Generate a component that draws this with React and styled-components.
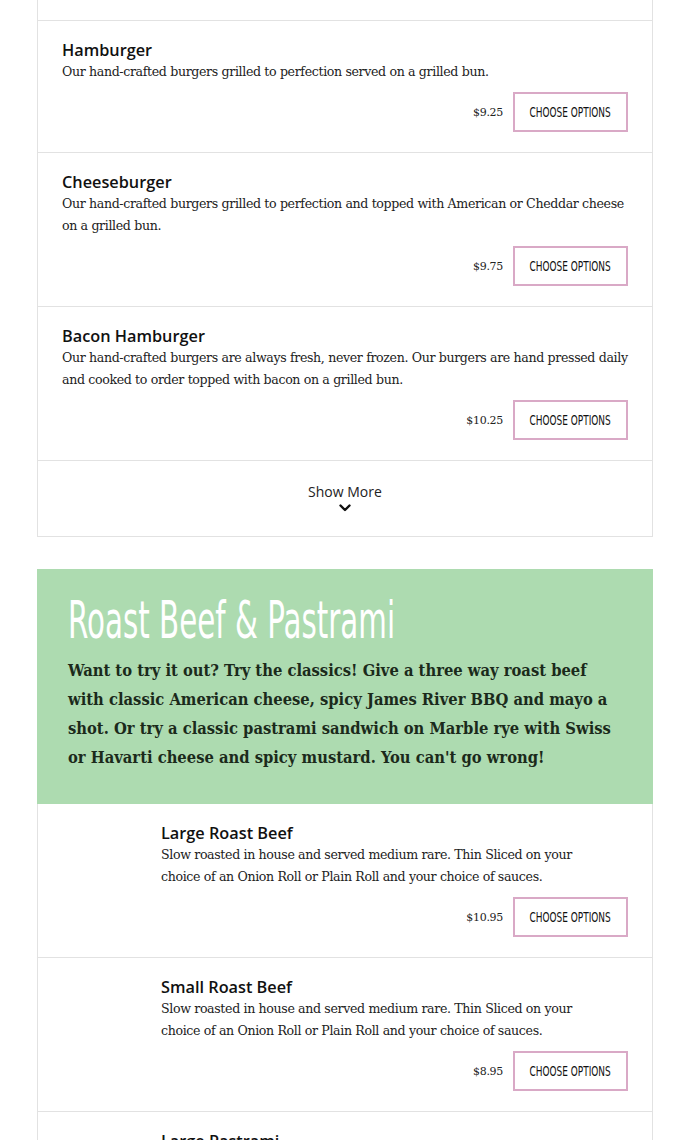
import React from "react";
import styled, { createGlobalStyle } from "styled-components";

const Global = createGlobalStyle`
  html, body { margin: 0; padding: 0; background: #fff; }
  body { font-family: "Open Sans", sans-serif; color: #111; }
`;

const Page = styled.div`
  padding: 0 37px 40px;
  display: flex;
  flex-direction: column;
  gap: 32px;
`;

const Card = styled.div`
  border: 1px solid #e2e2e2;
  border-top: ${(p) => (p.$flushTop ? "none" : "1px solid #e2e2e2")};
  display: flex;
  flex-direction: column;
`;

const TopSpacer = styled.div`
  height: 20px;
`;

const Item = styled.div`
  display: flex;
  padding: 18px 24px 20px ${(p) => (p.$indent ? "123px" : "24px")};
  border-top: ${(p) => (p.$first ? "none" : "1px solid #e2e2e2")};
`;

const ItemBody = styled.div`
  flex: 1;
  display: flex;
  flex-direction: column;
  padding-right: ${(p) => (p.$indent ? "30px" : "0")};
`;

const Title = styled.h3`
  margin: 0;
  font-family: "Open Sans", sans-serif;
  font-weight: 600;
  font-size: 16.3px;
  line-height: 22px;
  color: #111;
`;

const Desc = styled.p`
  margin: 0;
  font-family: "DejaVu Serif", serif;
  font-size: 12.6px;
  line-height: 22px;
  color: #222;
  letter-spacing: -0.36px;
`;

const Actions = styled.div`
  display: flex;
  justify-content: flex-end;
  align-items: center;
  gap: 10px;
  margin-top: 9px;
  margin-right: ${(p) => (p.$indent ? "-30px" : "0")};
`;

const Price = styled.span`
  font-family: "DejaVu Serif", serif;
  font-size: 11px;
  letter-spacing: -0.3px;
  color: #222;
`;

const Button = styled.button`
  width: 115px;
  height: 40px;
  border: 2px solid #d9a9c6;
  background: #fff;
  padding: 0;
  display: flex;
  align-items: center;
  justify-content: center;
  cursor: pointer;
`;

const ButtonLabel = styled.span`
  display: inline-block;
  white-space: nowrap;
  font-family: "DejaVu Sans Condensed", "DejaVu Sans", sans-serif;
  font-size: 14px;
  color: #111;
  transform: scaleX(0.71);
`;

const ShowMore = styled.div`
  border-top: 1px solid #e2e2e2;
  height: 76px;
  display: flex;
  flex-direction: column;
  align-items: center;
  justify-content: center;
  gap: 3px;
  font-family: "Open Sans", sans-serif;
  font-size: 14px;
  line-height: 19px;
  color: #222;
  padding-bottom: 4px;
  box-sizing: border-box;
`;

const Banner = styled.div`
  background: #addbb0;
  padding: 24px 31px 32px;
  margin: -1px -1px 0;
`;

const BannerTitle = styled.h2`
  margin: 0;
  font-family: "DejaVu Sans Condensed", "DejaVu Sans", sans-serif;
  font-weight: 400;
  font-size: 51px;
  line-height: 56px;
  white-space: nowrap;
  color: #fff;
  transform: scaleX(0.64);
  transform-origin: left center;
`;

const BannerText = styled.p`
  margin: 7px 0 0;
  font-family: "DejaVu Serif Condensed", "DejaVu Serif", serif;
  font-weight: 700;
  font-size: 16.4px;
  line-height: 29px;
  color: #1b2a1b;
`;

const Chevron = () => (
  <svg width="12" height="8" viewBox="0 0 12 8">
    <path d="M1.5 1.5 L6 6 L10.5 1.5" fill="none" stroke="#111" strokeWidth="2.4" strokeLinecap="round" strokeLinejoin="round" />
  </svg>
);

const MenuItem = ({ title, desc, price, first, indent }) => (
  <Item $first={first} $indent={indent}>
    <ItemBody $indent={indent}>
      <Title>{title}</Title>
      <Desc>{desc}</Desc>
      <Actions $indent={indent}>
        <Price>{price}</Price>
        <Button>
          <ButtonLabel>CHOOSE OPTIONS</ButtonLabel>
        </Button>
      </Actions>
    </ItemBody>
  </Item>
);

const burgers = [
  { title: "Hamburger", desc: "Our hand-crafted burgers grilled to perfection served on a grilled bun.", price: "$9.25" },
  { title: "Cheeseburger", desc: "Our hand-crafted burgers grilled to perfection and topped with American or Cheddar cheese on a grilled bun.", price: "$9.75" },
  { title: "Bacon Hamburger", desc: "Our hand-crafted burgers are always fresh, never frozen. Our burgers are hand pressed daily and cooked to order topped with bacon on a grilled bun.", price: "$10.25" },
];

const beef = [
  { title: "Large Roast Beef", desc: "Slow roasted in house and served medium rare. Thin Sliced on your choice of an Onion Roll or Plain Roll and your choice of sauces.", price: "$10.95" },
  { title: "Small Roast Beef", desc: "Slow roasted in house and served medium rare. Thin Sliced on your choice of an Onion Roll or Plain Roll and your choice of sauces.", price: "$8.95" },
  { title: "Large Pastrami", desc: "Thin sliced pastrami on Marble rye with Swiss or Havarti cheese and spicy mustard.", price: "$10.95" },
];

export default function App() {
  return (
    <>
      <Global />
      <Page>
        <Card $flushTop>
          <TopSpacer />
          {burgers.map((b) => (
            <MenuItem key={b.title} {...b} />
          ))}
          <ShowMore>
            <span>Show More</span>
            <Chevron />
          </ShowMore>
        </Card>
        <Card>
          <Banner>
            <BannerTitle>Roast Beef &amp; Pastrami</BannerTitle>
            <BannerText>
              Want to try it out? Try the classics! Give a three way roast beef with classic American cheese, spicy James River BBQ and mayo a shot. Or try a classic pastrami sandwich on Marble rye with Swiss or Havarti cheese and spicy mustard. You can't go wrong!
            </BannerText>
          </Banner>
          {beef.map((b, i) => (
            <MenuItem key={b.title} indent first={i === 0} {...b} />
          ))}
        </Card>
      </Page>
    </>
  );
}
